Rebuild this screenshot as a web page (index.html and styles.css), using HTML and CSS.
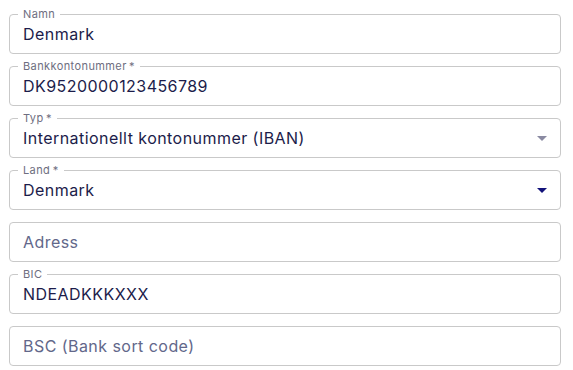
FILE: index.html
```html
<!DOCTYPE html>
<html lang="sv">
<head>
<meta charset="UTF-8">
<meta name="viewport" content="width=device-width, initial-scale=1.0">
<title>Bankkonto</title>
<link rel="stylesheet" href="styles.css">
</head>
<body>

<form class="form">
  <div class="field">
    <span class="label">Namn</span>
    <span class="value">Denmark</span>
  </div>

  <div class="field">
    <span class="label">Bankkontonummer&thinsp;*</span>
    <span class="value">DK9520000123456789</span>
  </div>

  <div class="field select">
    <span class="label">Typ&thinsp;*</span>
    <span class="value">Internationellt kontonummer (IBAN)</span>
    <span class="arrow"></span>
  </div>

  <div class="field select">
    <span class="label">Land&thinsp;*</span>
    <span class="value">Denmark</span>
    <span class="arrow active"></span>
  </div>

  <div class="field">
    <span class="placeholder">Adress</span>
  </div>

  <div class="field">
    <span class="label">BIC</span>
    <span class="value">NDEADKKKXXX</span>
  </div>

  <div class="field">
    <span class="placeholder">BSC (Bank sort code)</span>
  </div>
</form>

</body>
</html>
```

FILE: styles.css
```css
/* form styles */
body {
  font-family: 'Inter', 'Liberation Sans', sans-serif;
  margin: 0;
  padding: 0;
  background: #fff;
  color: #1c1c4a;
}

.form {
  display: flex;
  flex-direction: column;
  gap: 12px;
  padding: 14px 12px 0 9px;
}

.field {
  position: relative;
  box-sizing: border-box;
  height: 40px;
  border: 1px solid #c9c9c9;
  border-radius: 4px;
  display: flex;
  align-items: center;
  padding: 0 13px;
}

.label {
  position: absolute;
  top: -7px;
  left: 8px;
  padding: 0 5px;
  background: #fff;
  font-size: 11px;
  line-height: 12px;
  letter-spacing: 0.4px;
  color: #6e6e80;
}

.value,
.placeholder {
  flex: 1;
  font-size: 16px;
  letter-spacing: 0.45px;
}

.value {
  color: #1c1c4a;
}

.placeholder {
  color: #62678a;
}

.arrow {
  width: 0;
  height: 0;
  border-left: 5px solid transparent;
  border-right: 5px solid transparent;
  border-top: 5px solid #8a8aa2;
}

.arrow.active {
  border-top-color: #12127a;
}
```
